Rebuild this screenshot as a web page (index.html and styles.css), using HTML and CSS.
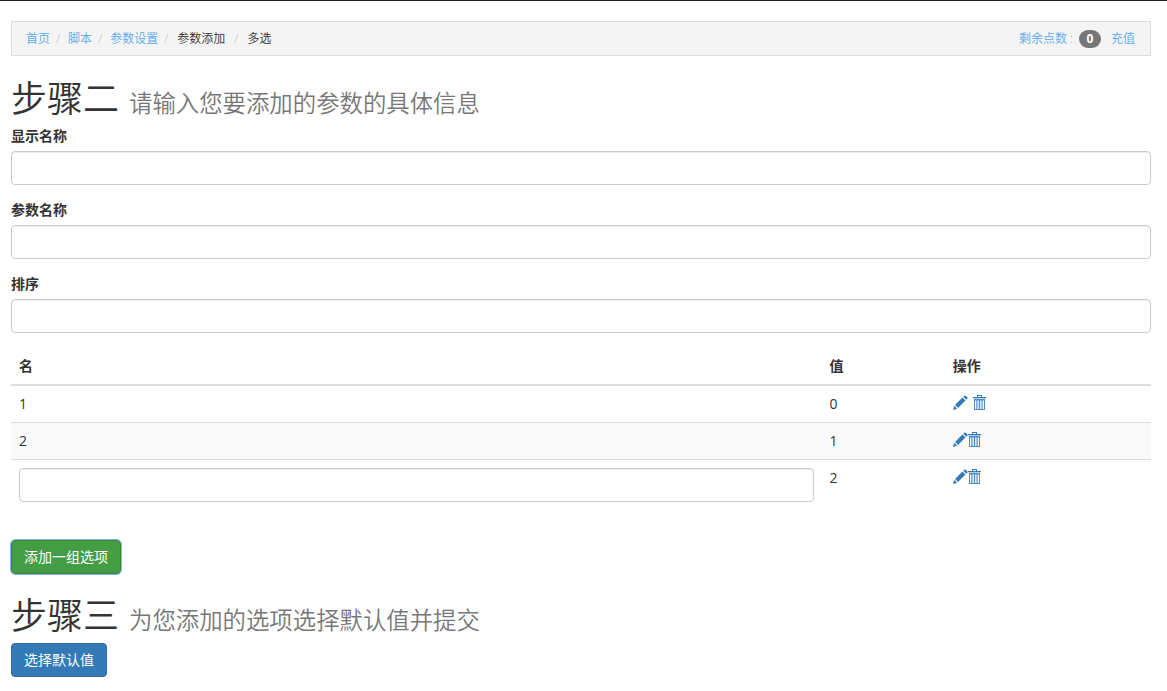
FILE: index.html
```html
<!DOCTYPE html>
<html lang="zh-CN">
<head>
<meta charset="utf-8">
<meta name="viewport" content="width=device-width, initial-scale=1">
<title>参数添加</title>
<link rel="stylesheet" href="styles.css">
</head>
<body>
<svg class="sprite" aria-hidden="true">
  <symbol id="pencil" viewBox="0 0 14 14">
    <path d="M0 14l1.1-3.9 2.8 2.8zM1.9 9.3l6.9-6.9 2.8 2.8-6.9 6.9zM9.6 1.6l1-1q.6-.5 1.2 0l1.6 1.6q.5.6 0 1.2l-1 1z"/>
  </symbol>
  <symbol id="trash" viewBox="0 0 13 15">
    <path d="M4 0h5v2h4v1H0V2h4zM5 1v1h3V1z" fill-rule="evenodd"/>
    <path d="M0 3h13v1H0z" opacity=".35"/>
    <path d="M1 4h11v10.500q0 .5-.5.500h-10q-.5 0-.5-.5zM2 5.500V14h1.300V5.500zM4.500 5.500V14h1.300V5.500zM7.200 5.500V14h1.300V5.500zM9.700 5.500V14H11V5.500z" fill-rule="evenodd" opacity=".85"/>
  </symbol>
</svg>
<nav class="topbar">
  <ol class="breadcrumb">
    <li><a href="#">首页</a></li>
    <li><a href="#">脚本</a></li>
    <li><a href="#">参数设置</a></li>
    <li class="wide">参数添加</li>
    <li class="wide">多选</li>
  </ol>
  <div class="account">
    <a class="points" href="#"><span>剩余点数 :</span><span class="badge">0</span></a>
    <a href="#">充值</a>
  </div>
</nav>
<main>
  <h1>步骤二 <small>请输入您要添加的参数的具体信息</small></h1>
  <form>
    <div class="form-group">
      <label for="display-name">显示名称</label>
      <input class="form-control" id="display-name" type="text">
    </div>
    <div class="form-group">
      <label for="param-name">参数名称</label>
      <input class="form-control" id="param-name" type="text">
    </div>
    <div class="form-group">
      <label for="sort">排序</label>
      <input class="form-control" id="sort" type="text">
    </div>
    <table class="options">
      <thead>
        <tr><th class="col-name">名</th><th class="col-value">值</th><th>操作</th></tr>
      </thead>
      <tbody>
        <tr>
          <td>1</td><td>0</td>
          <td><div class="actions spaced"><a href="#" aria-label="编辑"><svg class="pencil"><use href="#pencil"/></svg></a><a href="#" aria-label="删除"><svg class="trash"><use href="#trash"/></svg></a></div></td>
        </tr>
        <tr>
          <td>2</td><td>1</td>
          <td><div class="actions"><a href="#" aria-label="编辑"><svg class="pencil"><use href="#pencil"/></svg></a><a href="#" aria-label="删除"><svg class="trash"><use href="#trash"/></svg></a></div></td>
        </tr>
        <tr>
          <td><input class="form-control" type="text" aria-label="名"></td><td>2</td>
          <td><div class="actions"><a href="#" aria-label="编辑"><svg class="pencil"><use href="#pencil"/></svg></a><a href="#" aria-label="删除"><svg class="trash"><use href="#trash"/></svg></a></div></td>
        </tr>
      </tbody>
    </table>
    <button class="btn btn-success" type="button">添加一组选项</button>
  </form>
  <h1>步骤三 <small>为您添加的选项选择默认值并提交</small></h1>
  <button class="btn btn-primary" type="button">选择默认值</button>
</main>
</body>
</html>
```
FILE: styles.css
```css
* { box-sizing: border-box; }

body {
  margin: 0;
  padding: 20px 16px 14px 11px;
  border-top: 1px solid #222;
  background: #fff;
  color: #333;
  font: 14px/20px "Open Sans", "Noto Sans CJK SC", sans-serif;
}

a { color: #337ab7; text-decoration: none; }

.sprite { display: none; }

.topbar {
  display: flex;
  justify-content: space-between;
  align-items: center;
  height: 35px;
  margin-bottom: 20px;
  padding: 0 15px 0 14px;
  border: 1px solid #ddd;
  background: #f4f4f4;
  font-size: 12px;
  font-weight: 350;
}
.topbar a { color: #59a9e9; }

.breadcrumb {
  display: flex;
  margin: 0;
  padding: 0;
  list-style: none;
}
.breadcrumb li + li::before {
  content: "/";
  padding: 0 8px 0 6px;
  color: #bbb;
}
.breadcrumb li.wide::before { padding-right: 9px; }
.breadcrumb li.wide + li.wide::before { padding-left: 9px; }

.account { display: flex; gap: 10px; }
.points { display: flex; align-items: center; gap: 6px; }

.badge {
  min-width: 22px;
  padding: 3px 7px;
  border-radius: 10px;
  background: #777;
  color: #fff;
  font-size: 12px;
  font-weight: 700;
  line-height: 12px;
  text-align: center;
}

h1 {
  margin: 0 0 10px;
  font-family: "Noto Sans CJK SC", sans-serif;
  font-size: 36px;
  font-weight: 350;
  line-height: 40px;
}
h1 small {
  margin-left: 2px;
  color: #777;
  font-size: 65%;
  line-height: 1;
}

.form-group { margin-bottom: 15px; }
.form-group label {
  display: block;
  margin-bottom: 5px;
  font-weight: 700;
}

.form-control {
  display: block;
  width: 100%;
  height: 34px;
  padding: 6px 12px;
  border: 1px solid #ccc;
  border-radius: 4px;
  background: #fff;
  box-shadow: inset 0 1px 1px rgba(0, 0, 0, .075);
  color: #555;
  font: inherit;
}

.options {
  width: 100%;
  margin-bottom: 30px;
  border-collapse: separate;
  border-spacing: 0;
  table-layout: fixed;
}
.options th,
.options td {
  padding: 8px;
  text-align: left;
  vertical-align: top;
}
.options th { border-bottom: 2px solid #ddd; }
.options tr + tr td { border-top: 1px solid #ddd; }
.options tbody tr:nth-child(even) { background: #f9f9f9; }
.col-name { width: 71.1%; }
.col-value { width: 10.8%; }

.actions { display: flex; height: 17px; }
.actions a { display: flex; align-items: center; }
.actions.spaced { gap: 5px; }
.actions svg { display: block; fill: currentColor; }
.pencil { width: 15px; height: 15px; }
.trash { width: 13px; height: 15px; }

.btn {
  display: block;
  padding: 6px 12px;
  border: 1px solid;
  border-radius: 4px;
  color: #fff;
  font: inherit;
}
.btn-success {
  margin-bottom: 19px;
  border-color: #398439;
  background: #449d44;
  outline: 1px solid #8ab4f0;
}
.btn-primary {
  border-color: #2e6da4;
  background: #337ab7;
}
```
